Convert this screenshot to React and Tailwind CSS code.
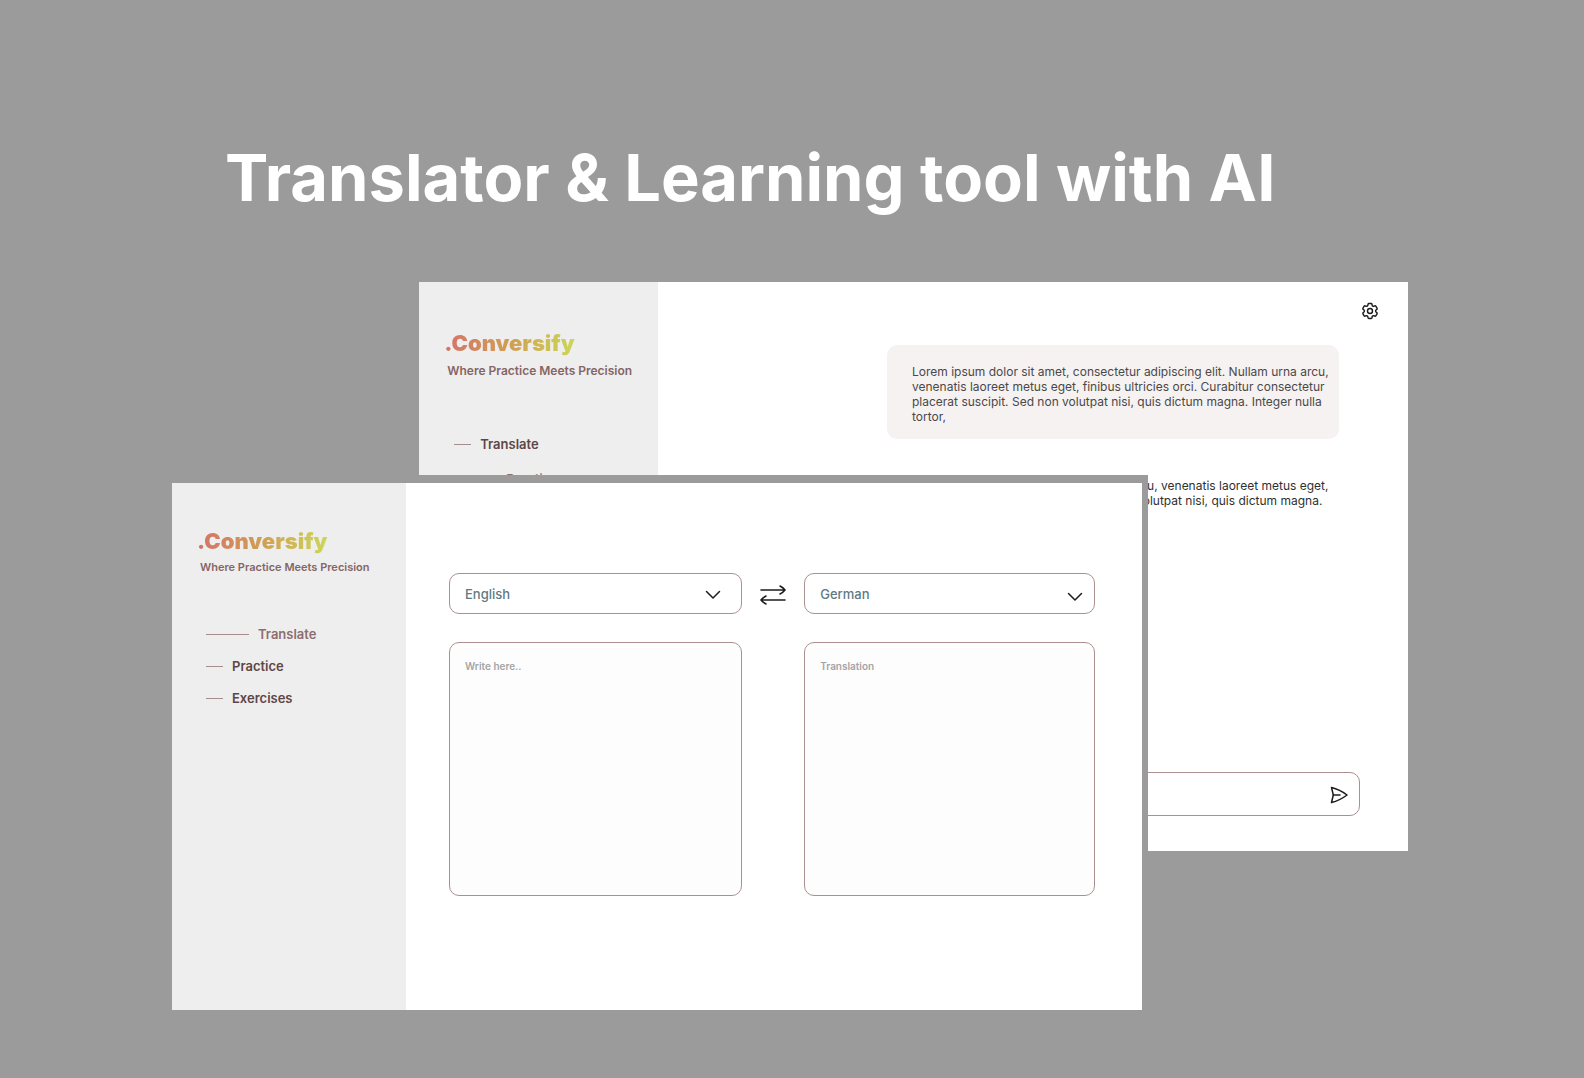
function Logo() {
  return (
    <p className="w-fit bg-linear-to-r from-[#d4706a] via-[#cf9f52] to-[#cbd758] bg-clip-text text-[22px] leading-7 font-black text-transparent">
      .Conversify
    </p>
  );
}

function NavItem({ label, active }) {
  return (
    <li>
      <a
        href="#"
        className={`flex items-center gap-[9px] font-semibold ${active ? "text-[#8d6e6e]" : "text-[#5e4646]"}`}
      >
        <span className={`h-px bg-[#a58d8d] ${active ? "w-[43px]" : "w-[17px]"}`} />
        {label}
      </a>
    </li>
  );
}

function GearIcon() {
  return (
    <svg viewBox="0 0 24 24" className="size-5" fill="none" stroke="currentColor" strokeWidth="1.7" strokeLinecap="round" strokeLinejoin="round">
      <path d="M9.594 3.94c.09-.542.56-.94 1.11-.94h2.593c.55 0 1.02.398 1.11.94l.213 1.281c.063.374.313.686.645.87.074.04.147.083.22.127.325.196.72.257 1.075.124l1.217-.456a1.125 1.125 0 0 1 1.37.49l1.296 2.247a1.125 1.125 0 0 1-.26 1.431l-1.003.827c-.293.241-.438.613-.43.992a7 7 0 0 1 0 .255c-.008.378.137.75.43.991l1.004.827c.424.35.534.955.26 1.43l-1.298 2.247a1.125 1.125 0 0 1-1.369.491l-1.217-.456c-.355-.133-.75-.072-1.076.124a7 7 0 0 1-.22.128c-.331.183-.581.495-.644.869l-.213 1.281c-.09.543-.56.94-1.11.94h-2.594c-.55 0-1.019-.398-1.11-.94l-.213-1.281c-.062-.374-.312-.686-.644-.87a7 7 0 0 1-.22-.127c-.325-.196-.72-.257-1.076-.124l-1.217.456a1.125 1.125 0 0 1-1.369-.49l-1.297-2.247a1.125 1.125 0 0 1 .26-1.431l1.004-.827c.292-.24.437-.613.43-.991a7 7 0 0 1 0-.255c.007-.38-.138-.751-.43-.992l-1.004-.827a1.125 1.125 0 0 1-.26-1.43l1.297-2.247a1.125 1.125 0 0 1 1.37-.491l1.216.456c.356.133.751.072 1.076-.124q.108-.066.22-.128c.332-.183.582-.495.644-.869z" />
      <circle cx="12" cy="12" r="3" />
    </svg>
  );
}

function SendIcon() {
  return (
    <svg viewBox="0 0 18 18" className="size-[18px]" fill="none" stroke="currentColor" strokeWidth="1.5" strokeLinecap="round" strokeLinejoin="round">
      <path d="M1.5 1.5C7 2.8 12 5.2 17 9 12 12.8 7 15.2 1.5 16.5L3.3 9Z" />
      <path d="M3.3 9H10" />
    </svg>
  );
}

function ChevronIcon() {
  return (
    <svg viewBox="0 0 16 10" className="h-[10px] w-4" fill="none" stroke="currentColor" strokeWidth="1.5" strokeLinecap="round" strokeLinejoin="round">
      <path d="M1.5 1.5 8 8l6.5-6.5" />
    </svg>
  );
}

function SwapIcon() {
  return (
    <svg viewBox="0 0 26 20" className="h-5 w-[26px]" fill="none" stroke="currentColor" strokeWidth="1.6" strokeLinecap="round" strokeLinejoin="round">
      <path d="M1 5h24M20 1q3 1.500 5 4-2 2.500-5 4" />
      <path d="M25 15H1M6 11q-3 1.500-5 4 2 2.500 5 4" />
    </svg>
  );
}

function LanguageSelect({ label, options, iconClass }) {
  return (
    <div className="relative">
      <select
        aria-label={label}
        className="h-[41px] w-full appearance-none rounded-[10px] border border-[#ab9090] bg-white px-[15px] pt-0.5 text-[13px] font-medium text-[#5f7a82]"
      >
        {options.map((o) => (
          <option key={o}>{o}</option>
        ))}
      </select>
      <span className={`pointer-events-none absolute text-[#1c1c1c] ${iconClass}`}>
        <ChevronIcon />
      </span>
    </div>
  );
}

function ChatWindow() {
  return (
    <section className="col-start-1 row-start-1 ml-auto flex h-[569px] w-[80%] bg-white">
      <aside className="w-[239px] shrink-0 bg-[#eeeeee] pt-[47px] pl-[25px]">
        <Logo />
        <p className="mt-1.5 pl-[3px] text-[12px] leading-4 font-semibold text-[#866565]">
          Where Practice Meets Precision
        </p>
        <ul className="mt-[55px] flex flex-col gap-[15px] pl-[10px] text-[13px] leading-5">
          <NavItem label="Translate" />
          <NavItem label="Practice" active />
          <NavItem label="Exercises" />
        </ul>
      </aside>
      <div className="flex min-w-0 flex-1 flex-col pt-[19px] pb-[35px]">
        <button type="button" aria-label="Settings" className="mr-7 self-end text-[#1c1c1c]">
          <GearIcon />
        </button>
        <p className="mt-6 mr-[69px] w-[452px] self-end rounded-[10px] bg-[#f6f2f1] pt-[19px] pr-1.5 pb-[15px] pl-[25px] text-[12px] leading-[15px] text-[#4a4848]">
          Lorem ipsum dolor sit amet, consectetur adipiscing elit. Nullam urna arcu, venenatis laoreet metus eget,
          finibus ultricies orci. Curabitur consectetur placerat suscipit. Sed non volutpat nisi, quis dictum magna.
          Integer nulla tortor,
        </p>
        <p className="mt-[39px] mr-[67px] w-[600px] self-end text-[12px] leading-[15px] text-[#303030]">
          Lorem ipsum dolor sit amet, consectetur adipiscing elit. Nullam urna arcu, venenatis laoreet metus eget,
          finibus ultricies orci. Curabitur consectetur placerat suscipit. Sed non volutpat nisi, quis dictum magna.
          Integer nulla tortor,
        </p>
        <form className="mt-auto mr-12 ml-12 flex h-11 items-center rounded-[10px] border border-[#ab9090] pr-[11px]">
          <input aria-label="Message" className="h-full min-w-0 flex-1 bg-transparent px-4 text-[12px] outline-none" />
          <button type="button" aria-label="Send" className="pt-0.5 text-[#1c1c1c]">
            <SendIcon />
          </button>
        </form>
      </div>
    </section>
  );
}

function TranslatorWindow() {
  return (
    <section className="z-10 col-start-1 row-start-1 mt-[193px] flex h-[535px] w-[79%] border-t-8 border-r-6 border-[#9b9b9b] bg-white">
      <aside className="w-[234px] shrink-0 bg-[#eeeeee] pt-11 pl-[25px]">
        <Logo />
        <p className="mt-1 pl-[3px] text-[11px] leading-4 font-semibold text-[#866565]">
          Where Practice Meets Precision
        </p>
        <ul className="mt-[49px] flex flex-col gap-3 pl-[9px] text-[13px] leading-5">
          <NavItem label="Translate" active />
          <NavItem label="Practice" />
          <NavItem label="Exercises" />
        </ul>
      </aside>
      <div className="grid min-w-0 flex-1 grid-cols-[293fr_62px_291fr] grid-rows-[41px_254px] content-start gap-y-7 pt-[90px] pr-[47px] pl-[43px]">
        <LanguageSelect label="Source language" options={["English", "German"]} iconClass="top-[17px] right-[21px]" />
        <button type="button" aria-label="Swap languages" className="justify-self-center pt-0.5 text-[#1c1c1c]">
          <SwapIcon />
        </button>
        <LanguageSelect label="Target language" options={["German", "English"]} iconClass="top-[19px] right-3" />
        <textarea
          aria-label="Text to translate"
          placeholder="Write here.."
          className="resize-none rounded-[10px] border border-[#ab9090] bg-[#fdfdfd] px-[15px] py-[15px] text-[10px] leading-4 font-semibold placeholder:text-[#a5a5a5]"
        />
        <textarea
          aria-label="Translation"
          placeholder="Translation"
          readOnly
          className="col-start-3 resize-none rounded-[10px] border border-[#ab9090] bg-[#fdfdfd] px-[15px] py-[15px] text-[10px] leading-4 font-semibold placeholder:text-[#a5a5a5]"
        />
      </div>
    </section>
  );
}

export default function App() {
  return (
    <main className="min-h-screen bg-[#9b9b9b] pt-[138px] pr-[176px] pb-[68px] pl-[172px] font-['Inter',sans-serif]">
      <h1 className="pl-[53px] text-[65px] leading-20 font-bold text-white">
        Translator &amp; Learning tool with AI
      </h1>
      <div className="mt-16 grid items-start">
        <ChatWindow />
        <TranslatorWindow />
      </div>
    </main>
  );
}
